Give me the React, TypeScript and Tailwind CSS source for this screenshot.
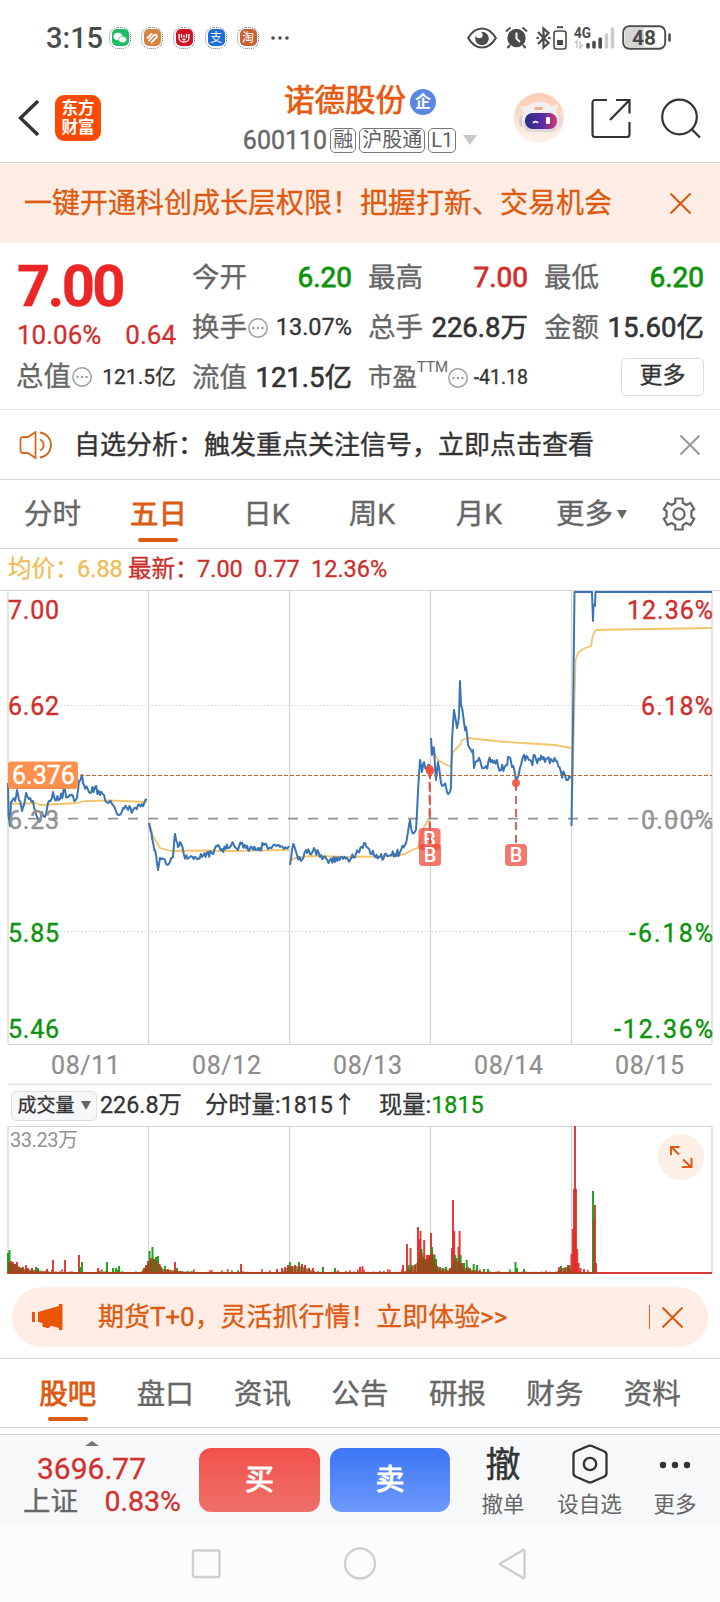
import { FC, ReactNode } from "react";

type Point = [number, number];

const days = ["08/11", "08/12", "08/13", "08/14", "08/15"];
const gridX = [8, 148.5, 289.5, 430.5, 571.5, 712];

const priceDays: { jitter: number; points: Point[] }[] = [
  {
    jitter: 3.5,
    points: [
      [8, 783], [8.5, 815], [10, 826], [11, 802], [13, 799], [15, 801], [17, 790], [19, 800], [22, 811],
      [24, 805], [26, 793], [29, 799], [33, 801], [35, 810], [39, 822], [42, 812], [45, 817], [48, 803],
      [52, 798], [53, 792], [55, 800], [60, 799], [65, 790], [67, 797], [77, 798], [79, 781], [82, 775],
      [84, 785], [90, 793], [95, 787], [100, 795], [104, 795], [108, 803], [112, 804], [116, 811],
      [119, 815], [123, 808], [127, 808], [133, 810], [138, 805], [142, 804], [147, 800],
    ],
  },
  {
    jitter: 3.5,
    points: [
      [149, 823], [152, 838], [155, 850], [158, 870], [160, 858], [164, 859], [166, 864], [170, 862],
      [173, 857], [175, 834], [178, 847], [180, 842], [184, 855], [190, 857], [202, 857], [212, 853],
      [216, 846], [222, 849], [230, 847], [233, 843], [238, 850], [241, 844], [246, 848], [260, 848],
      [264, 845], [268, 849], [280, 847], [284, 849], [289, 846],
    ],
  },
  {
    jitter: 3.5,
    points: [
      [290, 865], [292, 850], [294, 845], [297, 855], [301, 861], [306, 850], [310, 854], [314, 848],
      [320, 857], [330, 860], [350, 860], [358, 852], [364, 843], [368, 848], [374, 855], [380, 857],
      [388, 856], [395, 854], [400, 852], [405, 845], [408, 832], [410, 820], [412, 832], [416, 830],
      [417, 812], [420, 760], [422, 772], [424, 762], [427, 770], [430, 765],
    ],
  },
  {
    jitter: 5.5,
    points: [
      [431, 738], [432, 755], [434, 748], [436, 780], [438, 762], [441, 783], [444, 785], [447, 792],
      [449, 793], [451, 787], [452, 740], [454, 710], [457, 728], [459, 715], [460, 681], [461, 705],
      [464, 722], [466, 727], [468, 745], [471, 750], [473, 750], [474, 768], [479, 758], [482, 768],
      [486, 766], [492, 760], [497, 760], [501, 770], [506, 765], [508, 757], [512, 767], [516, 780],
      [520, 768], [524, 755], [530, 760], [540, 760], [545, 762], [556, 761], [561, 772], [565, 775],
      [568, 780], [571, 778],
    ],
  },
  {
    jitter: 0,
    points: [
      [571.5, 826], [573, 720], [574.5, 592], [592, 592], [593, 621], [593.5, 605], [595, 606],
      [595.5, 592], [712, 592],
    ],
  },
];

const averages = [
  "8,803 20,804 35,803 40,805 60,804 77,803 85,801 110,800.5 147,802",
  "149,822 153,836 160,848 171,851 200,850.5 230,851 289,850",
  "290,861 295,858 310,856 350,857 395,856 405,854 412,850 418,848 424,827 429,818",
  "431,748 438,760 445,764 451,767 453,752 460,745 462,740 467,738 500,741.5 530,743.5 555,745 571,748",
  "572,800 575.5,660 578,653 583,649 591,646 593,635 596,630 620,629.5 650,629 712,628",
];

const random = (seed: number) => {
  const value = Math.sin(seed * 127.1 + 11.7) * 43758.5453;
  return value - Math.floor(value);
};

// adds the small tick movement between two known prices
const toLine = (points: Point[], jitter: number) => {
  const out: string[] = [];
  points.forEach(([x, y], i) => {
    out.push(`${x},${y}`);
    const next = points[i + 1];
    if (!next || !jitter) return;
    for (let px = x + 1.2; px < next[0] - 0.6; px += 1.2) {
      const t = (px - x) / (next[0] - x);
      const offset = (random(px) - 0.5) * 2 * jitter;
      out.push(`${px.toFixed(1)},${(y + (next[1] - y) * t + offset).toFixed(1)}`);
    }
  });
  return out.join(" ");
};

const red = "#e22b28";
const darkRed = "#d0342f";
const green = "#159a14";
const brown = "#8f4a1a";

// [x, height, colour]
const spikes: [number, number, string][] = [
  [8, 20, green], [9.5, 23, green], [11, 12, red], [13, 11, red], [15, 9, red], [17, 11, red], [19, 6, red],
  [21, 5, green], [23, 6, red], [26, 8, red], [28, 5, red], [32, 5, red], [36, 6, green], [38, 5, green],
  [47, 4, red], [53, 13, red], [65, 13, red], [79, 18, red], [80.5, 6, green], [82, 11, green],
  [98, 5, red], [107, 11, green], [113, 5, green], [116, 5, green], [119, 7, green],
  [144, 5, red], [146, 8, red], [148, 12, red], [149.5, 22, green], [151, 15, red], [152.5, 26, green],
  [154, 14, green], [156, 16, green], [158, 17, green], [159.5, 9, red], [161, 6, green], [165, 7, green],
  [168, 4, red], [175, 11, red], [177, 5, green], [241, 9, red], [277, 4, red], [282, 5, red], [285, 6, red],
  [288, 8, red], [290, 11, green], [292, 7, red], [295, 8, red], [299, 11, green], [302, 9, red],
  [305, 8, red], [309, 5, red], [313, 5, red], [323, 6, green], [335, 5, green], [360, 6, red],
  [362.5, 7, red], [403, 8, red], [407, 29, red], [408.5, 8, green], [410.5, 25, red], [411.5, 8, green],
  [415, 8, red], [418, 46, red], [419.5, 34, red], [420.5, 42, red], [421.5, 24, green], [423, 15, red],
  [424.2, 33, red], [425.5, 14, green], [426.8, 18, red], [428, 18, red], [429.3, 18, red],
  [431, 40, red], [432, 26, green], [433.3, 19, red], [434.6, 18, green], [436, 14, green],
  [437.5, 7, red], [440, 6, green], [443, 5, green], [446, 6, green], [450, 5, red], [452, 25, red],
  [453, 73, red], [454.2, 42, red], [455.2, 18, green], [456.4, 15, green], [458.5, 26, red],
  [459.6, 42, red], [460.6, 18, green], [462, 10, red], [464, 10, green], [466.7, 13, green],
  [468, 6, red], [470, 5, green], [473.7, 9, green], [477, 8, green], [484, 4, green], [488, 4, green],
  [515.5, 11, green], [517, 5, green], [524, 4, green], [559, 6, red], [561, 7, green], [565, 5, red],
  [568, 8, red], [569.5, 8, green], [571.5, 19, red], [572.8, 44, red], [574, 84, red], [575, 147, red],
  [576, 84, red], [577.2, 24, red], [578.6, 10, red], [580.5, 5, red], [584, 4, red],
  [593, 82, green], [594, 54, brown], [595, 68, darkRed], [596, 10, red],
];

// busy minutes, where red and green volumes run into each other
const humps = [
  "8,1273 8,1262 14,1264 24,1269 45,1271 60,1273",
  "140,1273 148,1264 153,1258 158,1262 163,1269 180,1271 190,1273",
  "280,1273 288,1267 300,1266 306,1268 316,1272 320,1273",
  "404,1273 410,1268 418,1262 421,1250 426,1262 432,1254 438,1268 450,1270 455,1260 460,1262 466,1269 480,1271 486,1273",
  "556,1273 562,1268 570,1266 572,1273",
];

const noiseBars = Array.from({ length: 290 }, (_, i) => {
  const x = 9 + i * 2;
  return { x, h: 1 + random(i + 3) ** 5 * 3, color: random(i * 3 + 1) > 0.35 ? red : green };
});

const marks: { x: number; dot: number; top: number }[] = [
  { x: 429.5, dot: 769, top: 828 },
  { x: 430, dot: 771, top: 844 },
  { x: 516, dot: 783, top: 844 },
];

const MainChart: FC = () => (
  <svg width="720" height="494" viewBox="0 591 720 494" className="block">
    <g stroke="#d4d4d6" strokeWidth="1.2">
      {gridX.map((x) => (
        <line key={x} x1={x} x2={x} y1="591" y2="1044" />
      ))}
      <line x1="8" x2="712" y1="1044.5" y2="1044.5" />
    </g>
    <line x1="8" x2="712" y1="1084.5" y2="1084.5" stroke="#e2e2e4" strokeWidth="2" />
    <g stroke="#d2d2d2" strokeWidth="1" strokeDasharray="1.5 2">
      <line x1="8" x2="712" y1="705.5" y2="705.5" />
      <line x1="8" x2="712" y1="931.5" y2="931.5" />
    </g>
    <g fill="none" stroke="#f3c469" strokeWidth="1.8" strokeLinejoin="round">
      {averages.map((points) => (
        <polyline key={points} points={points} />
      ))}
    </g>
    <line x1="28" x2="712" y1="818.7" y2="818.7" stroke="#929292" strokeWidth="1.8" strokeDasharray="10 10" />
    <g fill="none" stroke="#3a74b5" strokeWidth="2" strokeLinejoin="round">
      {priceDays.map((day, i) => (
        <polyline key={i} points={toLine(day.points, day.jitter)} />
      ))}
    </g>
    <line x1="8" x2="712" y1="775.5" y2="775.5" stroke="#b5673a" strokeWidth="1.2" strokeDasharray="4 2" />
    {marks.map(({ x, dot, top }) => (
      <g key={`${x}-${top}`}>
        <line x1={x} x2={x} y1={dot} y2={top} stroke="#dd5348" strokeWidth="1.8" strokeDasharray="8 5" />
        <circle cx={x} cy={dot} r="4" fill="#f04a38" fillOpacity="0.85" />
        <rect x={x - 11} y={top} width="22" height="22" rx="4" fill="#ee4436" fillOpacity="0.72" />
        <text x={x} y={top + 18} textAnchor="middle" fontSize="20" fontWeight="500" fill="#fff">
          B
        </text>
      </g>
    ))}
    <g fontSize="25" strokeWidth="0.4">
      <g fill="#d0302d" stroke="#d0302d">
        <text x="8" y="619" textLength="51">7.00</text>
        <text x="8" y="715" textLength="51">6.62</text>
        <text x="627" y="619" textLength="86">12.36%</text>
        <text x="641" y="715" textLength="72">6.18%</text>
      </g>
      <g fill="#929292" stroke="#929292">
        <text x="8" y="829" textLength="51">6.23</text>
        <text x="641" y="829" textLength="72">0.00%</text>
      </g>
      <g fill="#0d930d" stroke="#0d930d">
        <text x="8" y="942" textLength="51">5.85</text>
        <text x="8" y="1038" textLength="51">5.46</text>
        <text x="629" y="942" textLength="84">-6.18%</text>
        <text x="614" y="1038" textLength="99">-12.36%</text>
      </g>
      <g fill="#8d8d8d" stroke="#8d8d8d" strokeWidth="0.2">
        {days.map((day, i) => (
          <text key={day} x={51 + i * 141} y="1074" textLength="69">
            {day}
          </text>
        ))}
      </g>
    </g>
    <rect x="8" y="761.5" width="70" height="27.5" rx="3" fill="#fd904c" />
    <text x="12" y="784" fontSize="25" fill="#fff" stroke="#fff" strokeWidth="0.4">
      6.376
    </text>
  </svg>
);

const VolumeChart: FC = () => (
  <svg width="720" height="149" viewBox="0 1126 720 149" className="block">
    <g stroke="#d4d4d6" strokeWidth="1.2">
      {gridX.map((x) => (
        <line key={x} x1={x} x2={x} y1="1126" y2="1273" />
      ))}
      <line x1="8" x2="712" y1="1126.5" y2="1126.5" />
    </g>
    {noiseBars.map(({ x, h, color }) => (
      <rect key={x} x={x} y={1273 - h} width="1.8" height={h} fill={color} fillOpacity="0.8" />
    ))}
    {spikes.map(([x, h, color], i) => (
      <rect key={i} x={x - 1} y={1273 - h} width="2" height={h} fill={color} fillOpacity="0.92" />
    ))}
    {humps.map((points) => (
      <polygon key={points} points={points} fill={brown} fillOpacity="0.75" />
    ))}
    <line x1="7" x2="597" y1="1273" y2="1273" stroke="#b0421f" strokeWidth="1.8" />
    <line x1="597" x2="712" y1="1273" y2="1273" stroke="#d8383a" strokeWidth="1.8" />
    <text x="10" y="1147" fontSize="20" fill="#929292" textLength="68">
      33.23万
    </text>
    <circle cx="681" cy="1157" r="23" fill="#fdeee6" />
    <path
      d="M679 1154.500l-7.500-7.500m-.5 8v-8h8.500M683 1159.500l8 7.500m.5-9v9H682"
      fill="none"
      stroke="#dc5a12"
      strokeWidth="2"
    />
  </svg>
);

const Cross: FC<{ size: number; color: string }> = ({ size, color }) => (
  <svg width={size} height={size} viewBox="0 0 20 20" fill="none" stroke={color} strokeWidth="2">
    <path d="M0.500 0.500L19.500 19.500M19.500 0.500L0.500 19.500" />
  </svg>
);

const Info: FC = () => (
  <svg width="20" height="20" viewBox="0 0 20 20" className="shrink-0">
    <circle cx="10" cy="10" r="9.200" fill="none" stroke="#999" strokeWidth="1.4" />
    <g fill="#999">
      <circle cx="5.500" cy="10" r="1.200" />
      <circle cx="10" cy="10" r="1.200" />
      <circle cx="14.500" cy="10" r="1.200" />
    </g>
  </svg>
);

const AppDot: FC<{ className: string; children?: ReactNode }> = ({ className, children }) => (
  <span className="w-[22px] h-[22px] rounded-[9px] border border-dotted border-gray-500 flex items-center justify-center">
    <span
      className={`w-[17px] h-[17px] shrink-0 rounded-[5px] flex items-center justify-center text-[12px] leading-none text-white ${className}`}
    >
      {children}
    </span>
  </span>
);

const StatusBar: FC = () => (
  <div className="h-[75px] pl-[46px] pr-[48px] flex items-center justify-between text-[#4b4b4b]">
    <div className="flex items-center">
      <span className="w-[63px] pt-[2px] text-[29px] font-medium">3:15</span>
      <div className="flex items-center gap-[10px]">
        <AppDot className="bg-[#1dbb62]">
          <svg width="14" height="12" viewBox="0 0 14 12" fill="#fff">
            <ellipse cx="5" cy="4.500" rx="4.500" ry="3.800" />
            <ellipse cx="9.500" cy="7.500" rx="4" ry="3.300" stroke="#1dbb62" strokeWidth="0.6" />
          </svg>
        </AppDot>
        <AppDot className="bg-[#d5853f]">
          <svg width="14" height="14" viewBox="0 0 14 14" fill="none" stroke="#fff" strokeWidth="1.8" strokeLinecap="round">
            <path d="M2.500 7l4-4M4 9.500l5-5.500M6.500 11.500l5-5a1.800 1.800 0 0 0-2.500-2.500" />
          </svg>
        </AppDot>
        <AppDot className="bg-[#cf1322]">
          <svg width="14" height="14" viewBox="0 0 14 14" fill="none" stroke="#fff" strokeWidth="1.3">
            <path d="M2 3v4a5 4 0 0 0 10 0V3M4.500 3v4M9.500 3v4M5.500 8.500h3M7 4v2.500" />
          </svg>
        </AppDot>
        <AppDot className="bg-[#1d6fd6]">支</AppDot>
        <AppDot className="bg-[#c9602f]">淘</AppDot>
      </div>
      <svg width="18" height="4" viewBox="0 0 18 4" className="ml-[12px]" fill="#4b4b4b">
        <circle cx="2" cy="2" r="1.800" />
        <circle cx="9" cy="2" r="1.800" />
        <circle cx="16" cy="2" r="1.800" />
      </svg>
    </div>
    <div className="flex items-center">
      <svg width="30" height="22" viewBox="0 0 30 22">
        <path d="M1.200 11C5 4.500 9.500 1.500 15 1.500S25 4.500 28.800 11C25 17.500 20.500 20.500 15 20.500S5 17.500 1.200 11z" fill="none" stroke="#4b4b4b" strokeWidth="2.200" />
        <circle cx="15" cy="11.500" r="6.800" fill="#4b4b4b" />
        <circle cx="12.300" cy="8" r="3.300" fill="#fff" />
      </svg>
      <svg width="23" height="23" viewBox="0 0 23 23" className="ml-[8px]">
        <circle cx="11.500" cy="12" r="9.200" fill="#4b4b4b" />
        <path d="M1 5.500L5.500 1.500M22 5.500L17.500 1.500M5 19l-2.500 3M18 19l2.500 3" stroke="#4b4b4b" strokeWidth="2" />
        <path d="M11.500 6.500v6l3.500 3.500" stroke="#fff" strokeWidth="2" fill="none" />
      </svg>
      <svg width="15" height="24" viewBox="0 0 15 24" className="ml-[8px]" fill="none" stroke="#4b4b4b" strokeWidth="2.200">
        <path d="M2 6l10.500 11L7.500 21.500V2.500l5 4.500L2 18" />
        <path d="M0.500 12h2.500M12 12h2.500" />
      </svg>
      <svg width="14" height="24" viewBox="0 0 14 24" className="ml-[2px]">
        <path d="M4 1.200h6" stroke="#4b4b4b" strokeWidth="2" />
        <rect x="1" y="5" width="12" height="18" rx="2.500" fill="none" stroke="#4b4b4b" strokeWidth="1.600" />
        <rect x="4" y="14" width="6" height="5" fill="#4b4b4b" />
      </svg>
      <svg width="42" height="24" viewBox="0 0 42 24" className="ml-[7px]">
        <text x="0" y="12" fontSize="15" fontWeight="700" fill="#4b4b4b" textLength="17" lengthAdjust="spacingAndGlyphs">
          4G
        </text>
        <path d="M1 17l2-2v7M6 15v7l3-3.500" fill="none" stroke="#c4c4c4" strokeWidth="1.400" />
        <g strokeWidth="3.600" strokeLinecap="round" stroke="#4b4b4b">
          <path d="M14 18.500v2.500" />
          <path d="M20 16.500v4.500" />
          <path d="M26.200 13v8" />
          <path d="M32.500 9v12M38.500 3v18" stroke="#cbcbcb" />
        </g>
      </svg>
      <svg width="50" height="25" viewBox="0 0 50 25" className="ml-[6px]">
        <rect x="1.200" y="1.200" width="42" height="22.600" rx="6" fill="#fff" stroke="#4b4b4b" strokeWidth="1.900" />
        <path d="M7 3h15v19H7a4 4 0 0 1-4-4V7a4 4 0 0 1 4-4z" fill="#d6d6d6" />
        <path d="M47.500 9.500v6" stroke="#4b4b4b" strokeWidth="2.500" strokeLinecap="round" />
        <text x="22" y="20" textAnchor="middle" fontSize="21" fontWeight="700" fill="#4b4b4b">
          48
        </text>
      </svg>
    </div>
  </div>
);

const Tag: FC<{ children: ReactNode }> = ({ children }) => (
  <span className="h-[25px] px-[2px] border border-[#777] rounded-[5px] flex items-center text-[20px] leading-none text-[#606060]">
    {children}
  </span>
);

const Header: FC = () => (
  <header className="h-[88px] pl-[18px] pr-[19px] border-b border-[#d6d6d8] grid grid-cols-[220px_244px_1fr]">
    <div className="flex items-center pb-[2px] gap-[16px]">
      <svg width="21" height="36" viewBox="0 0 21 36" fill="none" stroke="#333" strokeWidth="3.400">
        <path d="M20 1L2.500 18L20 35" />
      </svg>
      <div className="w-[46px] h-[46px] rounded-[9px] bg-[#fc4a03] text-white text-[16.500px] font-bold leading-[19px] flex flex-col items-center justify-center">
        <span>东方</span>
        <span>财富</span>
      </div>
    </div>
    <div className="flex flex-col items-center pt-[8px]">
      <div className="h-[37px] flex items-center gap-[4px]">
        <h1 className="text-[30.5px] leading-none text-[#e8590f] [-webkit-text-stroke:0.7px]">诺德股份</h1>
        <span className="w-[26px] h-[26px] rounded-full bg-[#5b87e3] text-white text-[16px] font-bold leading-none flex items-center justify-center">
          企
        </span>
      </div>
      <div className="h-[40px] flex items-center gap-[3px] text-[#666]">
        <span className="text-[25px] [-webkit-text-stroke:0.4px]">600110</span>
        <Tag>融</Tag>
        <Tag>沪股通</Tag>
        <Tag>L1</Tag>
        <svg width="14" height="10" viewBox="0 0 14 10" className="ml-[4px]" fill="#c8c8c8">
          <path d="M0 0h14L7 10z" />
        </svg>
      </div>
    </div>
    <div className="flex items-center justify-end pb-[1px]">
      <svg width="50" height="50" viewBox="0 0 50 50">
        <defs>
          <linearGradient id="halo" x1="0" y1="0" x2="0" y2="1">
            <stop offset="0" stopColor="#fdcab2" />
            <stop offset="1" stopColor="#fff3ec" />
          </linearGradient>
          <linearGradient id="visor" x1="0" y1="0" x2="1" y2="0">
            <stop offset="0" stopColor="#24307f" />
            <stop offset="0.55" stopColor="#5a2aa8" />
            <stop offset="1" stopColor="#d23a6c" />
          </linearGradient>
        </defs>
        <circle cx="25" cy="25" r="25" fill="url(#halo)" />
        <ellipse cx="9" cy="28" rx="4" ry="6" fill="#cfc9d0" />
        <ellipse cx="45" cy="28" rx="4" ry="6" fill="#e2dbdf" />
        <path d="M6 12c2 2 5 2 8 1 3-3 7-4 12-4s9 1 11 4c3 0 5-1 7-2-1 3-1 6-2 8 4 8 3 15-2 20H13C7 34 7 26 10 20c-2-2-3-5-4-8z" fill="#f4f0f1" />
        <path d="M9 28c0 6 2 10 5 11h25c4-2 5-6 5-11z" fill="#ded8dc" />
        <rect x="20" y="14" width="9" height="3" rx="1.500" fill="#e8b58b" />
        <rect x="11" y="20" width="32" height="16" rx="7.500" fill="url(#visor)" />
        <path d="M19 30a3 3 0 0 1 5 0" fill="none" stroke="#fff" strokeWidth="1.600" />
        <rect x="32" y="24" width="4" height="7" rx="1" fill="#fff" />
      </svg>
      <svg width="40" height="40" viewBox="0 0 40 40" className="ml-[27px]" fill="none" stroke="#333" strokeWidth="2.200">
        <path d="M16 2H4a2.500 2.500 0 0 0-2.500 2.500v32A2.500 2.500 0 0 0 4 39h32a2.500 2.500 0 0 0 2.500-2.500V24M25 2h13.500v13.500M38.500 2L19 22" />
      </svg>
      <svg width="40" height="40" viewBox="0 0 40 40" className="ml-[30px]" fill="none" stroke="#333" strokeWidth="2.200">
        <circle cx="18.500" cy="19" r="17.300" />
        <path d="M30.500 31l8.500 8.500" />
      </svg>
    </div>
  </header>
);

const Quote: FC<{ label: string; value: string; valueClass: string; info?: boolean }> = ({
  label,
  value,
  valueClass,
  info,
}) => (
  <div className="h-[50px] flex items-center justify-between whitespace-nowrap">
    <span className="-ml-[1px] flex items-center gap-[1px] text-[27.5px] text-[#666]">
      {label}
      {info && <Info />}
    </span>
    <span className={valueClass}>{value}</span>
  </div>
);

const big = "text-[27.5px] text-[#333] [-webkit-text-stroke:0.6px]";

const Quotes: FC = () => (
  <section className="h-[167px] pt-[10px] pl-[17px] pr-[16px] grid grid-cols-4 gap-x-[17px] border-b border-[#e6e6e8] [-webkit-text-stroke:0.3px]">
    <div>
      <div className="h-[65px] flex items-center text-[58px] font-bold text-[#ec2626] tracking-[-2.700px]">7.00</div>
      <div className="h-[34px] flex items-center justify-between text-[26px] text-[#d2302e]">
        <span>10.06%</span>
        <span>0.64</span>
      </div>
      <Quote label="总值" value="121.5亿" valueClass="text-[21px] text-[#333]" info />
    </div>
    <div>
      <Quote label="今开" value="6.20" valueClass="text-[28px] text-[#0d930d] [-webkit-text-stroke:0.8px]" />
      <Quote label="换手" value="13.07%" valueClass="text-[23.5px] text-[#333]" info />
      <Quote label="流值" value="121.5亿" valueClass={big} />
    </div>
    <div>
      <Quote label="最高" value="7.00" valueClass="text-[28px] text-[#d0302d] [-webkit-text-stroke:0.8px]" />
      <Quote label="总手" value="226.8万" valueClass={big} />
      <div className="h-[50px] flex items-center justify-between">
        <span className="-ml-[1px] flex items-center text-[24.5px] text-[#666]">
          市盈
          <span className="text-[15px] mb-[22px] [-webkit-text-stroke:0px]">TTM</span>
          <Info />
        </span>
        <span className="text-[19.5px] text-[#333]">-41.18</span>
      </div>
    </div>
    <div>
      <Quote label="最低" value="6.20" valueClass="text-[28px] text-[#0d930d] [-webkit-text-stroke:0.8px]" />
      <Quote label="金额" value="15.60亿" valueClass={big} />
      <div className="h-[50px] flex items-center justify-end">
        <button className="w-[83px] h-[38px] mb-[2px] pb-[3px] border border-[#dcdcde] rounded-[5px] text-[23px] leading-none text-[#333]">
          更多
        </button>
      </div>
    </div>
  </section>
);

const Analysis: FC = () => (
  <section className="h-[70px] pl-[19px] pr-[20px] border-b border-[#d6d6d8] flex items-center">
    <svg width="35" height="28" viewBox="0 0 35 28" fill="none" stroke="#d2691e" strokeWidth="1.800">
      <path d="M16.500 1v26L9 22H4a2.500 2.500 0 0 1-2.500-2.500v-11A2.500 2.500 0 0 1 4 6h5zM21 8.500a6 6 0 0 1 0 11M21 1.500a12.600 12.600 0 0 1 0 25" />
    </svg>
    <p className="ml-[20px] flex-1 text-[26px] text-[#333] whitespace-nowrap [-webkit-text-stroke:0.4px]">
      自选分析：触发重点关注信号，立即点击查看
    </p>
    <Cross size={20} color="#999" />
  </section>
);

const PeriodTabs: FC = () => (
  <nav className="h-[69px] pt-[3px] border-b border-[#d6d6d8] grid grid-cols-[105px_107px_109px_102px_112px_113px_62px] items-center justify-items-center text-[28.5px] text-[#666] [-webkit-text-stroke:0.4px]">
    <span>分时</span>
    <span className="relative text-[#dc5a12] [-webkit-text-stroke:0.8px]">
      五日
      <span className="absolute left-1/2 -translate-x-1/2 bottom-[-12px] w-[40px] h-[4px] rounded-full bg-[#dc5a12]" />
    </span>
    <span>日K</span>
    <span>周K</span>
    <span>月K</span>
    <span className="flex items-center gap-[4px]">
      更多
      <svg width="10" height="9" viewBox="0 0 10 9" className="mb-[3px]" fill="#666">
        <path d="M0 0h10L5 9z" />
      </svg>
    </span>
    <svg width="34" height="34" viewBox="0 0 34 34" className="mb-[3px]" fill="none" stroke="#666" strokeWidth="2.200">
      <path d="M13.300 1.500h7.400v4.300l3.600 2.100 4.200-2 3.700 6.300-2.800 1.900v5.800l2.800 1.900-3.700 6.300-4.200-2-3.600 2.100v4.300h-7.400v-4.300l-3.600-2.100-4.200 2-3.700-6.300 2.800-1.900v-5.800l-2.800-1.900 3.700-6.300 4.200 2 3.600-2.100z" />
      <circle cx="17" cy="17" r="5.600" />
    </svg>
  </nav>
);

const VolumeHeader: FC = () => (
  <div className="h-[41px] pl-[11px] pt-[1px] flex items-center text-[23.3px] text-[#333] whitespace-nowrap [-webkit-text-stroke:0.3px]">
    <span className="w-[86px] h-[30px] mb-[1px] bg-[#f6f7f9] border border-[#dfe0e3] rounded-[5px] flex items-center justify-center gap-[6px] text-[19px]">
      成交量
      <svg width="10" height="9" viewBox="0 0 10 9" fill="#666">
        <path d="M0 0h10L5 9z" />
      </svg>
    </span>
    <span className="ml-[3px] w-[105px]">226.8万</span>
    <span className="w-[174px]">分时量:1815↑</span>
    <span>
      现量:<span className="text-[#0d930d]">1815</span>
    </span>
  </div>
);

const Promo: FC = () => (
  <section className="mx-[12px] mt-[12px] h-[60px] pl-[20px] pr-[25px] rounded-full bg-[#fdede4] flex items-center text-[#dc5a12]">
    <svg width="31" height="26" viewBox="0 0 31 26" fill="#ea5504">
      <path d="M0 8h3v10H0zM6 8L27 2V0h3.500v26H27v-2l-8-2.200-2.500 2.500-6-1.500V19L6 18z" />
    </svg>
    <p className="ml-[35px] flex-1 text-[26px] tracking-[-0.05px] whitespace-nowrap [-webkit-text-stroke:0.3px]">
      期货T+0，灵活抓行情！立即体验&gt;&gt;
    </p>
    <span className="w-px h-[24px] mr-[12px] bg-[#c9682f]" />
    <Cross size={21} color="#dc5a12" />
  </section>
);

const InfoTabs: FC = () => (
  <nav className="mt-[11px] h-[70px] pt-[4px] px-[19px] border-y border-[#d6d6d8] grid grid-cols-7 items-center justify-items-center text-[28.500px] text-[#666] [-webkit-text-stroke:0.4px]">
    <span className="relative text-[#dc5a12] [-webkit-text-stroke:0.8px]">
      股吧
      <span className="absolute left-1/2 -translate-x-1/2 bottom-[-12px] w-[40px] h-[4px] rounded-full bg-[#dc5a12]" />
    </span>
    {["盘口", "资讯", "公告", "研报", "财务", "资料"].map((tab) => (
      <span key={tab}>{tab}</span>
    ))}
  </nav>
);

const BottomBar: FC = () => (
  <footer className="mt-[6px] h-[91px] border-t border-[#d6d6d8] bg-[#f7f8fa] flex text-[#666]">
    <div className="w-[199px] pt-[6px] pl-[23px] pr-[18px] [-webkit-text-stroke:0.3px]">
      <svg width="14" height="5" viewBox="0 0 14 5" className="ml-[62px]" fill="#777">
        <path d="M0 5L7 0l7 5z" />
      </svg>
      <div className="h-[45px] pl-[14px] flex items-center text-[30px] text-[#d2302e]">3696.77</div>
      <div className="h-[22px] flex items-center justify-between text-[27.5px]">
        <span>上证</span>
        <span className="text-[28.5px] text-[#d2302e]">0.83%</span>
      </div>
    </div>
    <button className="mt-[13px] w-[121px] h-[64px] rounded-[12px] bg-linear-to-b from-[#f2504a] to-[#ee7069] text-white text-[29px] [-webkit-text-stroke:0.9px]">
      买
    </button>
    <button className="mt-[13px] ml-[10px] w-[120px] h-[64px] rounded-[12px] bg-linear-to-b from-[#3c76f5] to-[#6d99fb] text-white text-[29px] [-webkit-text-stroke:0.9px]">
      卖
    </button>
    <div className="ml-[10px] w-[86px] flex flex-col items-center">
      <span className="h-[57px] pt-[3px] flex items-center text-[35px] text-[#333] [-webkit-text-stroke:0.5px]">撤</span>
      <span className="text-[21.5px] leading-[25px]">撤单</span>
    </div>
    <div className="w-[87px] flex flex-col items-center">
      <span className="h-[57px] flex items-center">
        <svg width="36" height="40" viewBox="0 0 36 40" fill="none" stroke="#333" strokeWidth="2.300">
          <path d="M15.500 2.300a5 5 0 0 1 5 0l11.500 5a4 4 0 0 1 2.500 4v17.400a4 4 0 0 1-2.500 4l-11.500 5a5 5 0 0 1-5 0l-11.500-5a4 4 0 0 1-2.500-4V11.300a4 4 0 0 1 2.500-4z" />
          <circle cx="18" cy="20" r="6.200" />
        </svg>
      </span>
      <span className="text-[21.5px] leading-[25px]">设自选</span>
    </div>
    <div className="w-[84px] flex flex-col items-center">
      <span className="h-[57px] pt-[3px] flex items-center">
        <svg width="32" height="8" viewBox="0 0 32 8" fill="#333">
          <circle cx="4" cy="4" r="3.200" />
          <circle cx="16" cy="4" r="3.200" />
          <circle cx="28" cy="4" r="3.200" />
        </svg>
      </span>
      <span className="text-[21.5px] leading-[25px]">更多</span>
    </div>
  </footer>
);

const SystemNav: FC = () => (
  <div className="h-[77px] bg-[#fcfcfc] pl-[191px] pt-[22px] flex">
    <svg width="336" height="34" viewBox="0 0 336 34" fill="none" stroke="#cfcfcf" strokeWidth="2.400">
      <rect x="2" y="3.500" width="26.500" height="26.500" rx="1.500" />
      <circle cx="169" cy="16.500" r="15" />
      <path d="M308.500 17L332 3a1 1 0 0 1 1.500 1v26a1 1 0 0 1-1.500 1z" strokeLinejoin="round" />
    </svg>
  </div>
);

const App: FC = () => {
  return (
    <main className="w-[720px] h-[1602px] overflow-hidden bg-white font-['Roboto','Noto_Sans_CJK_SC',sans-serif] leading-none">
      <StatusBar />
      <Header />
      <section className="h-[80px] pl-[24px] pr-[29px] bg-[#fdede4] flex items-center justify-between text-[#dc5a12]">
        <p className="pt-[2px] text-[28px] whitespace-nowrap [-webkit-text-stroke:0.3px]">
          一键开通科创成长层权限！把握打新、交易机会
        </p>
        <Cross size={21} color="#dc5a12" />
      </section>
      <Quotes />
      <Analysis />
      <PeriodTabs />
      <div className="h-[42px] pl-[8px] pt-[1px] border-b border-[#d6d6d8] flex items-center text-[23.5px] text-[#c9302d] whitespace-nowrap [-webkit-text-stroke:0.3px]">
        <span className="w-[69px] text-[#efbc58]">均价：</span>
        <span className="w-[51px] text-[#efbc58]">6.88</span>
        <span className="w-[69px]">最新：</span>
        <span className="w-[57px]">7.00</span>
        <span className="w-[57px]">0.77</span>
        <span>12.36%</span>
      </div>
      <MainChart />
      <VolumeHeader />
      <VolumeChart />
      <Promo />
      <InfoTabs />
      <BottomBar />
      <SystemNav />
    </main>
  );
};

export default App;
